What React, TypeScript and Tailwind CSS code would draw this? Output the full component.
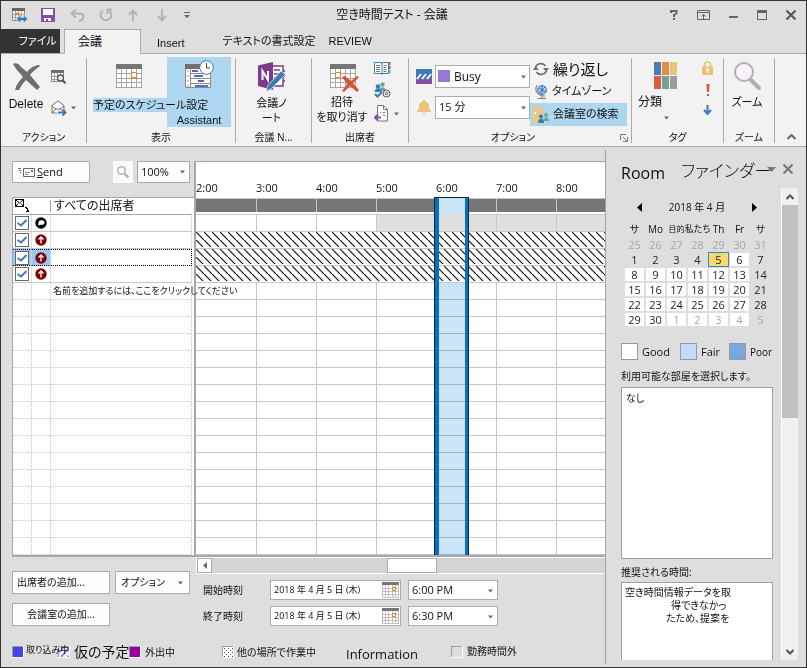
import { ReactNode } from "react";
import clsx from "clsx";

const HOURS = ["2:00", "3:00", "4:00", "5:00", "6:00", "7:00", "8:00"];
const ATTENDEES = ["organizer", "required", "required", "required"];
const EMPTY_ROWS = Array.from({ length: 15 }, (_, i) => i);

const WEEKDAYS = ["サ", "Mo", "目的", "私たち", "Th", "Fr", "サ"];
const WEEKS = [
  [25, 26, 27, 28, 29, 30, 31],
  [1, 2, 3, 4, 5, 6, 7],
  [8, 9, 10, 11, 12, 13, 14],
  [15, 16, 17, 18, 19, 20, 21],
  [22, 23, 24, 25, 26, 27, 28],
  [29, 30, 1, 2, 3, 4, 5],
];

function Caret({ className }: { className?: string }) {
  return (
    <svg className={className} width="7" height="4" viewBox="0 0 7 4" fill="#666">
      <path d="M0 0h7L3.5 4z" />
    </svg>
  );
}

type CalendarGridProps = { width: number; height: number; markX?: number };

function CalendarGrid({ width, height, markX = 15 }: CalendarGridProps) {
  return (
    <svg width={width} height={height} viewBox="0 0 26 24" shapeRendering="crispEdges">
      <path fill="#fff" d="M0 0h26v24H0z" />
      <path fill="none" stroke="#a5a5a5" d="M.5 5v18.500h25V5M5.500 5v18M10.500 5v18M15.500 5v18M20.500 5v18M0 9.500h26M0 14.500h26M0 18.500h26" />
      <path fill="#767676" d="M0 0h26v5H0z" />
      <rect x={markX + 0.5} y="8.500" width="5" height="5" fill="#fff" stroke="#e8822f" strokeWidth="1.500" />
    </svg>
  );
}

/* ---------- title bar ---------- */

function TitleBar() {
  return (
    <header className="flex h-7 items-center justify-between pr-[10px] pl-[11px]">
      <div className="flex items-center">
        <button aria-label="Meeting" className="w-[29px]">
          <svg width="16" height="15" viewBox="0 0 16 15">
            <path fill="#fff" stroke="#8a8a8a" d="M.5 1.500h12v11H.5z" />
            <path fill="#666" d="M0 0h13v3H0z" />
            <path stroke="#aaa" d="M3.500 3v9M6.500 3v9M9.500 3v9M1 6.500h12M1 9.500h12" />
            <path fill="none" stroke="#e8822f" strokeWidth="1.500" d="M3.500 9V5.500H7V8" />
            <path fill="#3d7ab8" stroke="#dedede" strokeWidth=".6" d="M4.500 11l4-4v2.500h3V7l4.300 4-4.300 4v-2.500h-3V15z" />
          </svg>
        </button>
        <button aria-label="Save" className="w-[29px]">
          <svg width="14" height="14" viewBox="0 0 14 14" shapeRendering="crispEdges">
            <path fill="#8650a8" d="M0 0h14v14H0z" />
            <path fill="#fff" d="M2 1h10v6H2zM3 10h7v3H3z" />
            <path fill="#8650a8" d="M5 11h2v2H5z" />
          </svg>
        </button>
        <button aria-label="Undo" className="w-[29px]">
          <svg width="15" height="13" viewBox="0 0 15 13" fill="none" stroke="#b3b3b3" strokeWidth="2">
            <path d="M6 .5L1.500 4.500 6 8.500M2 4.500h7c6 0 6 6 0 7.500" />
          </svg>
        </button>
        <button aria-label="Redo" className="w-[29px]">
          <svg width="14" height="14" viewBox="0 0 14 14" fill="none" stroke="#b3b3b3" strokeWidth="2">
            <path d="M4 2.500A5.300 5.300 0 1 0 10.500 3M8.500 6V1.500H13" />
          </svg>
        </button>
        <button aria-label="Previous" className="w-[29px]">
          <svg width="10" height="13" viewBox="0 0 10 13" fill="none" stroke="#b3b3b3" strokeWidth="2">
            <path d="M5 12V1.500M1 6l4-4.500L9 6" />
          </svg>
        </button>
        <button aria-label="Next" className="w-[27px]">
          <svg width="10" height="13" viewBox="0 0 10 13" fill="none" stroke="#b3b3b3" strokeWidth="2">
            <path d="M5 0v10.500M1 7l4 4.500L9 7" />
          </svg>
        </button>
        <button aria-label="Customize toolbar">
          <svg width="6" height="6" viewBox="0 0 6 6" fill="#666">
            <path d="M0 0h6v1H0zM0 3h6L3 6z" />
          </svg>
        </button>
      </div>
      <h1 className="mr-[76px] text-[12px] leading-4">空き時間テスト - 会議</h1>
      <div className="flex items-center gap-[15px]">
        <button aria-label="Help">
          <svg width="8" height="10" viewBox="0 0 8 10" fill="none" stroke="#666" strokeWidth="2">
            <path d="M1 3V1h5.500v2.500L4 5v2M4 8v2" />
          </svg>
        </button>
        <button aria-label="Ribbon display options" className="ml-1">
          <svg width="13" height="10" viewBox="0 0 13 10" fill="none" stroke="#666">
            <path d="M.5.5h12v9H.5zM1 2.500h11M6.500 9V4.500M4.500 6.500l2-2 2 2" />
          </svg>
        </button>
        <button aria-label="Minimize" className="ml-1">
          <svg width="9" height="10" viewBox="0 0 9 10">
            <path fill="#666" d="M0 6h9v2H0z" />
          </svg>
        </button>
        <button aria-label="Maximize" className="ml-1">
          <svg width="10" height="10" viewBox="0 0 10 10" shapeRendering="crispEdges">
            <path fill="none" stroke="#666" d="M.5.5h9v9h-9z" />
            <path fill="#666" d="M0 0h10v3H0z" />
          </svg>
        </button>
        <button aria-label="Close" className="ml-1">
          <svg width="10" height="10" viewBox="0 0 10 10" stroke="#555" strokeWidth="2">
            <path d="M.5.5l9 9M9.500.5l-9 9" />
          </svg>
        </button>
      </div>
    </header>
  );
}

function RibbonTabs() {
  return (
    <nav className="flex h-6 text-[12px] leading-6">
      <button className="w-[59px] bg-[#333] pl-[14px] text-[11px] text-white">ファイル</button>
      <button className="relative z-10 -mb-px ml-1 w-[77px] border border-b-0 border-[#ababab] bg-[#f2f2f2] pl-[13px] text-left">
        会議
      </button>
      <button className="ml-4 pt-[2px] [font-family:'Liberation_Sans',sans-serif] text-[11px]">Insert</button>
      <button className="ml-[38px] text-[11px]">テキストの書式設定</button>
      <button className="ml-[13px] [font-family:'Liberation_Sans',sans-serif] text-[11px]">REVIEW</button>
    </nav>
  );
}

/* ---------- ribbon ---------- */

type GroupProps = { title: ReactNode; className: string; children: ReactNode };

function Group({ title, className, children }: GroupProps) {
  return (
    <section className={clsx("flex shrink-0 flex-col border-r border-[#ababab]", className)}>
      <div className="flex h-[70px]">{children}</div>
      <h2 className="flex h-[15px] items-end justify-center text-[10px] leading-[11px] whitespace-nowrap">
        {title}
      </h2>
    </section>
  );
}

function Ribbon() {
  return (
    <div className="flex h-[94px] border-t border-b border-[#ababab] bg-[#f2f2f2] pt-1 pb-[3px]">
      <Group title="アクション" className="w-[86px]">
        <button className="flex w-[50px] flex-col items-center pt-[5px]">
          <svg width="29" height="27" viewBox="0 0 29 27" fill="#6e6e6e">
            <path d="M1 1c3-2 6 0 8 3l6 5c4-5 9-7 12-7l1 1c-4 3-8 6-10 9l10 12-3 3-11-10c-4 4-6 8-7 10H3c1-5 4-9 8-13C7 9 3 5 1 1z" />
          </svg>
          <span className="mt-1 text-[12px] leading-5 [font-family:'Liberation_Sans',sans-serif]">Delete</span>
        </button>
        <div className="flex flex-col items-start gap-4 pt-3">
          <button aria-label="Copy to my calendar">
            <svg width="15" height="14" viewBox="0 0 15 14">
              <path fill="#fff" stroke="#888" d="M.5.5h12v11H.5z" />
              <path fill="#6e6e6e" d="M0 0h13v3H0z" />
              <path stroke="#999" d="M3.500 3v9M6.500 3v9M9.500 3v9M1 6.500h12M1 9.500h12" />
              <circle cx="9.500" cy="8" r="3" fill="#f2f2f2" stroke="#555" strokeWidth="1.300" />
              <path stroke="#555" strokeWidth="2" d="M12 10.500l2.500 3" />
            </svg>
          </button>
          <button aria-label="Forward" className="flex items-center gap-1">
            <svg width="16" height="16" viewBox="0 0 16 16" fill="none" stroke="#6e6e6e">
              <path fill="#fff" d="M1 5.500L7 1l6 4.500V13H1z" />
              <path d="M1 6l4 3h4l4-3M1 13l4-4M13 13L9 9" />
              <path stroke="#f2f2f2" strokeWidth="4" d="M6 12.500h9" />
              <path stroke="#3d7ab8" strokeWidth="2" d="M7 12.500h7M11.500 9.500l3 3-3 3" />
            </svg>
            <Caret className="w-[5px]" />
          </button>
        </div>
      </Group>

      <Group title="表示" className="w-[149px]">
        <button className="relative z-10 flex w-[80px] flex-col pt-[6px] pl-[6px]">
          <span className="ml-[23px]">
            <CalendarGrid width={26} height={24} />
          </span>
          <span className="mt-[10px] w-max bg-[#afd6f1] text-[11px] leading-[14px] whitespace-nowrap">
            予定のスケジュール設定
          </span>
        </button>
        <button className="-mt-px flex h-[70px] w-[64px] flex-col items-center bg-[#afd6f1] pt-[3px]">
          <svg width="29" height="29" viewBox="0 0 29 29">
            <path fill="#fff" stroke="#8a8a8a" d="M.5 4.500h25v23H.5z" />
            <path fill="#6e6e6e" d="M0 4h18v5H0z" />
            <path stroke="#8a8a8a" d="M5.500 9v18M5 13.500h20M5 18.500h20M5 23.500h20" />
            <path stroke="#999" strokeDasharray="2 3" d="M3 10v17" />
            <path stroke="#8650a8" strokeWidth="2" d="M7 11h6M13 21h6" />
            <path stroke="#3d7ab8" strokeWidth="2" d="M9 16h9M10 26h13" />
            <circle cx="21.500" cy="7.500" r="6.800" fill="#fff" stroke="#3d7ab8" />
            <path fill="none" stroke="#444" d="M21.500 3v5H25" />
          </svg>
          <span className="mt-auto text-[11px] leading-[14px] [font-family:'Liberation_Sans',sans-serif]">Assistant</span>
        </button>
      </Group>

      <Group title="会議 N..." className="w-[76px]">
        <button className="flex w-full flex-col items-center pt-1 pr-1 text-[11px] leading-[15px]">
          <svg width="29" height="30" viewBox="0 0 29 30">
            <path fill="#fff" stroke="#7d3b8c" strokeWidth="1.500" d="M14 4h12v20H14z" />
            <path stroke="#7d3b8c" strokeWidth="1.500" d="M17 8h6M17 12h6M17 16h5M26 9h2M26 14h2M26 19h2" />
            <path fill="#7d3b8c" d="M1 3.500L16 0v28L1 24z" />
            <path fill="none" stroke="#fff" strokeWidth="2" d="M5.500 18V9l5.500 9V9" />
            <path fill="#3d7ab8" stroke="#f2f2f2" strokeWidth=".7" d="M24 9l4.500 3.500L14 27l-5 2.500L10.500 24z" />
          </svg>
          <span className="mt-[3px]">会議ノ<br />ート</span>
        </button>
      </Group>

      <Group title="出席者" className="w-[97px]">
        <button className="flex w-[60px] flex-col items-center pt-[6px] text-[11px] leading-[15px] whitespace-nowrap">
          <span className="ml-1 grid">
            <span className="col-start-1 row-start-1">
              <CalendarGrid width={26} height={24} markX={5} />
            </span>
            <svg className="col-start-1 row-start-1 mt-3 ml-3" width="17" height="16" viewBox="0 0 17 16" fill="#d45535">
              <path d="M0 1l3-1 6 5 6-5 2 1-6 6 6 7-2 2-7-6-6 6-2-1 5-7z" />
            </svg>
          </span>
          <span className="mt-[2px]">招待<br />を取り消す</span>
        </button>
        <div className="flex flex-col items-start gap-[7px] pt-[3px] pl-[2px]">
          <button aria-label="Address book">
            <svg width="17" height="14" viewBox="0 0 17 14" fill="none" stroke="#6e6e6e">
              <path fill="#fff" stroke="#3d7ab8" d="M.5 1.500h7l.5 1 .5-1h6v11h-6l-.5 1-.5-1h-7zM8 2v11" />
              <path stroke="#777" d="M2 4.500h4M2 6.500h4M2 8.500h4M2 10.500h4M9.500 4.500h3M9.500 6.500h3M9.500 8.500h3M9.500 10.500h3" />
              <path stroke="#d45535" strokeWidth="2" d="M15.500 1v3" />
              <path stroke="#3d7ab8" strokeWidth="2" d="M15.500 5v3" />
              <path stroke="#6fa795" strokeWidth="2" d="M15.500 9v3" />
            </svg>
          </button>
          <button aria-label="Check names">
            <svg width="17" height="16" viewBox="0 0 17 16">
              <circle cx="8.500" cy="2.500" r="2.300" fill="#6fa795" />
              <path fill="#6fa795" d="M5 9c0-5 7-5 7 0z" />
              <circle cx="4" cy="4.500" r="2.300" fill="#3d7ab8" />
              <path fill="#3d7ab8" d="M.5 10c0-5 7-5 7 0z" />
              <path fill="none" stroke="#3d7ab8" strokeWidth="2" d="M1 12l2.500 2.500L8 10" />
              <circle cx="12.500" cy="11.500" r="3.500" fill="#eee" stroke="#555" />
              <circle cx="12.500" cy="11.500" r="1.200" fill="none" stroke="#555" />
            </svg>
          </button>
          <button aria-label="Response options" className="flex items-center gap-[5px]">
            <svg width="15" height="17" viewBox="0 0 15 17">
              <path fill="#fff" stroke="#777" d="M3.500.5h6l4 4v11.500h-10z" />
              <path fill="none" stroke="#777" d="M9.500.5v4h4M6 7.500h1M9 7.500h2M9 10.500h2" />
              <path fill="none" stroke="#f2f2f2" strokeWidth="4" d="M0 12.500h6" />
              <path fill="none" stroke="#8650a8" strokeWidth="2" d="M1 12.500h6M4 9.500l-3 3 3 3" />
            </svg>
            <Caret className="w-[5px]" />
          </button>
        </div>
      </Group>

      <Group
        className="w-[223px]"
        title={
          <span className="flex w-full items-center">
            <span className="ml-[66px] flex-1 pl-4 text-left">オプション</span>
            <button aria-label="Options dialog" className="mr-[3px]">
              <svg width="8" height="8" viewBox="0 0 8 8" fill="none" stroke="#777">
                <path d="M.5 6V.5H6M3 3l4 4M7.500 3v4.500H3" />
              </svg>
            </button>
          </span>
        }
      >
        <div className="flex w-[121px] flex-col gap-2 pt-[7px] pl-[7px]">
          <label className="flex items-center gap-[3px]">
            <svg aria-label="Show as" width="16" height="15" viewBox="0 0 16 15">
              <path fill="#3d7ab8" d="M0 0h16v10H0z" />
              <path fill="#8650a8" d="M0 10h16v5H0z" />
              <path stroke="#fff" strokeWidth="2" d="M1 10l4-5M6 10l4-5M11 10l4-5" />
            </svg>
            <span className="relative flex flex-1">
              <select className="h-[23px] w-full appearance-none border border-[#ababab] bg-white pl-[18px] text-[12px]">
                <option>Busy</option>
              </select>
              <span className="absolute top-[5px] left-[3px] size-3 bg-[#967bd3]" />
              <Caret className="pointer-events-none absolute top-[10px] right-1 w-[5px]" />
            </span>
          </label>
          <label className="flex items-center gap-[3px]">
            <svg aria-label="Reminder" width="16" height="15" viewBox="0 0 16 15" fill="#e9c27c">
              <path d="M7 0h2v1c3 1 4 3 4 6 0 2 1 3 2 4v1H1v-1c1-1 2-2 2-4 0-3 1-5 4-6zM6 13h4l-2 2z" />
            </svg>
            <span className="relative flex flex-1">
              <select className="h-[23px] w-full appearance-none border border-[#ababab] bg-white pl-[3px] text-[11px]">
                <option>15 分</option>
              </select>
              <Caret className="pointer-events-none absolute top-[10px] right-1 w-[5px]" />
            </span>
          </label>
        </div>
        <div className="flex flex-1 flex-col">
          <button className="flex h-[22px] items-center gap-1 pl-[3px] text-[15px] leading-5">
            <svg width="16" height="14" viewBox="0 0 16 14" fill="none" stroke="#6e6e6e" strokeWidth="1.700">
              <path d="M2.500 7C2.500 1 10 0 12.500 4M13.500 7c0 6-7.500 7-10 3" />
              <path fill="#6e6e6e" stroke="none" d="M0 8h6L2.500 4.500zM10 6h6l-3 3.500z" />
            </svg>
            繰り返し
          </button>
          <button className="flex h-[23px] items-center gap-1 pl-[5px] text-[11px]">
            <svg width="13" height="15" viewBox="0 0 13 15" fill="none">
              <circle cx="7" cy="6" r="4.500" fill="#a8cce8" stroke="#3d7ab8" />
              <path stroke="#3d7ab8" d="M3 4l8 4M4 9l6-6M7 1.500v9" />
              <path stroke="#777" d="M2 1c-3 6 0 11 8 11M7 12v2M3 14.500h8" />
            </svg>
            タイムゾーン
          </button>
          <button className="flex h-[23px] w-[97px] items-center gap-1 bg-[#afd6f1] pl-[3px] text-[11px] whitespace-nowrap">
            <svg width="16" height="16" viewBox="0 0 16 16">
              <path fill="#f0c879" d="M0 0h10v16H0z" />
              <circle cx="2" cy="6" r="1" fill="#fff" />
              <circle cx="13" cy="8" r="2" fill="#6fa795" />
              <path fill="#6fa795" d="M10 14c0-5 6-5 6 0z" />
              <circle cx="8" cy="9.500" r="2" fill="#3d7ab8" />
              <path fill="#3d7ab8" d="M5 16c0-6 6-6 6 0z" />
            </svg>
            会議室の検索
          </button>
        </div>
      </Group>

      <Group title="タグ" className="w-[92px]">
        <button className="flex w-[62px] flex-col pt-1 pl-[6px] text-left text-[12px] leading-[18px]">
          <svg className="ml-4" width="23" height="27" viewBox="0 0 23 27" shapeRendering="crispEdges">
            <path fill="#4a7eb5" d="M0 0h7v13H0z" />
            <path fill="#e48d46" d="M8 0h7v13H8z" />
            <path fill="#e9c27c" d="M16 0h7v13h-7z" />
            <path fill="#d95c43" d="M0 14h7v13H0z" />
            <path fill="#72a38f" d="M8 14h7v13H8z" />
            <path fill="#9b9b9b" d="M16 14h7v13h-7z" />
          </svg>
          <span className="mt-[4px]">分類</span>
          <Caret className="mt-[5px] ml-[26px] w-[5px]" />
        </button>
        <div className="flex flex-col items-center gap-[9px] pt-[3px] pl-2">
          <button aria-label="Private">
            <svg width="11" height="14" viewBox="0 0 11 14">
              <path fill="none" stroke="#e9c27c" strokeWidth="1.500" d="M2.500 6V4c0-4 6-4 6 0v2" />
              <path fill="#e9c27c" d="M0 5.500h11V14H0z" />
              <path fill="#fff" d="M4 7.500h3v2l-1 .5v2H5v-2l-1-.5z" />
            </svg>
          </button>
          <button aria-label="High importance">
            <svg width="4" height="12" viewBox="0 0 4 12" fill="#d45535">
              <path d="M.5 0h3L3 8H1zM1 10h2v2H1z" />
            </svg>
          </button>
          <button aria-label="Low importance">
            <svg width="9" height="11" viewBox="0 0 9 11" fill="none" stroke="#3d7ab8" strokeWidth="2">
              <path d="M4.500 0v9M1 5l3.500 4L8 5" />
            </svg>
          </button>
        </div>
      </Group>

      <Group title="ズーム" className="w-[51px]">
        <button className="flex w-full flex-col items-center pt-1 pr-1 text-[11px] leading-4">
          <svg width="27" height="28" viewBox="0 0 27 28" stroke="#b0b0b0">
            <circle cx="10" cy="10" r="9" fill="#f7f3f8" strokeWidth="2" />
            <path strokeWidth="4" strokeLinecap="round" d="M17 18l8 8" />
          </svg>
          <span className="mt-1">ズーム</span>
        </button>
      </Group>

      <button aria-label="Collapse ribbon" className="mr-[10px] ml-auto self-end pb-[3px]">
        <svg width="9" height="6" viewBox="0 0 9 6" fill="none" stroke="#666" strokeWidth="2">
          <path d="M.5 5l4-4 4 4" />
        </svg>
      </button>
    </div>
  );
}

/* ---------- attendee list ---------- */

function Toolbar() {
  return (
    <div className="flex h-9 items-start">
      <button className="flex h-[22px] w-[78px] items-center gap-[2px] border border-[#ababab] bg-[#fdfdfd] pl-[5px] text-[11px] leading-4">
        <svg width="17" height="9" viewBox="0 0 17 9" fill="none" stroke="#666">
          <path d="M0 .5h3M1 2.500h2M2 4.500h1M5.500.5h11v8h-11z" />
          <path stroke="#999" d="M7 4.500h5M7 6.500h3" />
          <path stroke="#3d7ab8" strokeWidth="2" d="M13 3h2" />
        </svg>
        <span>
          <u>S</u>end
        </span>
      </button>
      <button aria-label="Zoom" className="ml-[23px] flex h-[22px] w-5 items-center justify-center bg-[#fafafa]">
        <svg width="12" height="12" viewBox="0 0 12 12" fill="none" stroke="#b8b3b8">
          <circle cx="4.500" cy="4.500" r="3.800" strokeWidth="1.500" />
          <path strokeWidth="2.500" d="M7.500 7.500l4 4" />
        </svg>
      </button>
      <span className="relative ml-1">
        <select aria-label="Zoom level" className="block h-[22px] w-[53px] appearance-none border border-[#ababab] bg-[#fdfdfd] pl-[3px] text-[11px]">
          <option>100%</option>
        </select>
        <Caret className="pointer-events-none absolute top-[9px] right-[5px] w-[5px]" />
      </span>
    </div>
  );
}

function AttendeeTable() {
  return (
    <table className="h-[360px] w-full table-fixed border-separate border-spacing-0 border border-b-2 border-r-0 border-[#a0a8b4] bg-white">
      <colgroup>
        <col className="w-[19px]" />
        <col className="w-[19px]" />
        <col />
        <col className="w-[2px]" />
      </colgroup>
      <thead>
        <tr className="h-[17px] leading-4">
          <th className="border-b border-[#a0a8b4] p-0 pl-[2px]">
            <svg width="15" height="14" viewBox="0 0 15 14" fill="none" stroke="#000" shapeRendering="crispEdges">
              <path d="M.5.5h8v7h-8z" />
              <path shapeRendering="auto" d="M1 1l3.500 3L8 1M1 7l2-2.500M8 7L6 4.500" />
              <path fill="#000" stroke="none" d="M10 8h2v1h1v2h1v2h-3v-1h1v-2h-1V9h-1z" />
            </svg>
          </th>
          <th className="border-b border-[#a0a8b4] p-0">
            <div className="h-3 border-r border-[#a0a8b4]" />
          </th>
          <th className="border-b border-[#a0a8b4] p-0 pl-[3px] text-left text-[12px] leading-4 font-normal">すべての出席者</th>
          <th className="p-0" />
        </tr>
      </thead>
      <tbody>
        {ATTENDEES.map((role, i) => {
          const selected = i === 2;
          const line = selected ? "border-y border-dotted border-y-black" : "border-b border-[#c6c6c6]";
          return (
            <tr key={i} className="h-[17px] leading-none">
              <td className={clsx("border-r border-r-[#dcdcdc] p-0", line, selected && "bg-[#9ccaf0]")}>
                <label className="grid w-[17px] place-items-center">
                  <input
                    type="checkbox"
                    defaultChecked
                    aria-label={`Attendee ${i + 1}`}
                    className="col-start-1 row-start-1 ml-px size-[14px] appearance-none border border-[#666] bg-white"
                  />
                  <svg className="pointer-events-none col-start-1 row-start-1 ml-px" width="10" height="8" viewBox="0 0 10 8" fill="none" stroke="#3d7ab8" strokeWidth="2">
                    <path d="M.5 4L4 6.500 9.500 1" />
                  </svg>
                </label>
              </td>
              <td className={clsx("border-r border-r-[#dcdcdc] p-0", line, selected && "bg-[#9ccaf0]")}>
                <svg className="ml-[3px]" width="12" height="12" viewBox="0 0 12 12">
                  {role === "organizer" ? (
                    <>
                      <circle cx="6" cy="6" r="5.700" />
                      <ellipse cx="6.500" cy="5.500" rx="3" ry="2.300" fill="#fff" />
                      <path fill="#fff" d="M3.500 6l-.5 2.500L6 7.500z" />
                    </>
                  ) : (
                    <>
                      <circle cx="6" cy="6" r="5.700" fill="#800000" />
                      <path fill="none" stroke="#fff" strokeWidth="1.300" d="M6 9.500V3M3.500 5.500L6 3l2.500 2.500" />
                    </>
                  )}
                </svg>
              </td>
              <td className={clsx("border-r p-0", selected ? "border-r-black" : "border-r-[#dcdcdc]", line)} />
              <td className="p-0" />
            </tr>
          );
        })}
        <tr className="h-[17px] leading-none">
          <td className="border-r border-b border-dotted border-[#c6c6c6] p-0" />
          <td className="border-r border-b border-dotted border-[#c6c6c6] p-0" />
          <td className="border-r border-b border-dotted border-[#c6c6c6] p-0 pl-[2px] text-[9px] leading-3 whitespace-nowrap">
            <span className="relative z-20">名前を追加するには、ここをクリックしてください</span>
          </td>
          <td className="p-0" />
        </tr>
        {EMPTY_ROWS.map((row) => (
          <tr key={row} className="h-[17px]">
            <td className="border-r border-b border-dotted border-[#c6c6c6] p-0" />
            <td className="border-r border-b border-dotted border-[#c6c6c6] p-0" />
            <td className="border-r border-b border-dotted border-[#c6c6c6] p-0" />
            <td className="p-0" />
          </tr>
        ))}
      </tbody>
    </table>
  );
}

/* ---------- timeline ---------- */

function HourCells({ busyFrom }: { busyFrom?: number }) {
  return (
    <>
      {HOURS.map((hour, i) => (
        <div
          key={hour}
          className={clsx(
            "w-[60px] shrink-0 border-[#c6c6c6] last:flex-1",
            i > 0 && "border-l",
            busyFrom !== undefined && i >= busyFrom && "bg-[#dfdfdf]",
          )}
        />
      ))}
    </>
  );
}

function Timeline() {
  return (
    <div className="relative h-[396px] overflow-hidden border-t border-b-2 border-l-2 border-[#a0a8b4] bg-white">
      <div className="flex h-9 items-end pb-[2px] text-[11px] leading-4">
        {HOURS.map((hour) => (
          <span key={hour} className="w-[60px] shrink-0">{hour}</span>
        ))}
      </div>
      <div className="h-[17px] border-t border-b border-[#c6c6c6] pb-[2px]">
        <div className="flex h-[13px] bg-[#767676]">
          <HourCells />
        </div>
      </div>
      <div className="flex h-[17px] border-b border-[#c6c6c6]">
        <HourCells busyFrom={3} />
      </div>
      {[0, 1, 2].map((row) => (
        <div key={row} className="h-[17px] border-b border-[#c6c6c6]">
          <svg className="block h-4 w-full">
            <defs>
              <pattern id={`hatch-${row}`} width="8" height="8" patternUnits="userSpaceOnUse">
                <path d="M-1-1l10 10" stroke="#111" strokeWidth="1.200" />
              </pattern>
            </defs>
            <rect width="100%" height="15" fill={`url(#hatch-${row})`} />
          </svg>
        </div>
      ))}
      {[...EMPTY_ROWS, 15].map((row) => (
        <div key={row} className="flex h-[17px] border-b border-[#c6c6c6]">
          <HourCells />
        </div>
      ))}
      {/* selected meeting slot, laid over the grid */}
      <div className="absolute top-[35px] bottom-0 left-[238px] w-[35px] border border-b-0 border-[#222]">
        <div className="h-full border-r-[3px] border-l-4 border-[#0072c6]">
          <div className="h-[16px] bg-[#cce4f7]" />
          <div className="h-[17px] bg-[#dfdfdf]" />
        </div>
      </div>
      <div className="absolute top-[121px] bottom-0 left-[243px] w-[26px] bg-[#cce4f7] mix-blend-multiply" />
    </div>
  );
}

function MeetingTimes() {
  const rows = [
    { id: "start", label: "開始時刻", time: "6:00 PM" },
    { id: "end", label: "終了時刻", time: "6:30 PM" },
  ];
  return (
    <div className="mt-[6px] flex flex-col gap-[6px] pl-[9px]">
      {rows.map((row) => (
        <div key={row.id} className="flex h-5 items-center">
          <label htmlFor={row.id} className="w-[67px] text-[10px]">{row.label}</label>
          <div className="flex h-5 w-[131px] items-center border border-[#ababab] bg-white pr-px">
            <input
              id={row.id}
              defaultValue="2018 年 4 月 5 日 (木)"
              className="min-w-0 flex-1 bg-transparent pl-[3px] text-[9px] outline-none"
            />
            <button aria-label="Pick a date">
              <CalendarGrid width={17} height={16} />
            </button>
          </div>
          <span className="relative ml-[7px]">
            <select aria-label={`${row.label} (時間)`} className="block h-5 w-[90px] appearance-none border border-[#ababab] bg-white pl-[3px] text-[11px]">
              <option>{row.time}</option>
            </select>
            <Caret className="pointer-events-none absolute top-[9px] right-[5px] w-[5px]" />
          </span>
        </div>
      ))}
    </div>
  );
}

function Swatch({ children }: { children: ReactNode }) {
  return (
    <svg className="shrink-0" width="12" height="12" viewBox="0 0 12 12" shapeRendering="crispEdges">
      {children}
      <path fill="none" stroke="#9c9c9c" d="M0 .5h11M.5 0v11" />
      <path fill="none" stroke="#fff" d="M0 11.500h12M11.500 0v12" />
    </svg>
  );
}

function Legend() {
  return (
    <footer className="mt-auto mb-[3px] flex h-6 items-center pl-[11px] text-[10px] leading-4 whitespace-nowrap">
      <span className="relative z-10 flex w-[46px] shrink-0 items-center gap-[2px]">
        <Swatch><path fill="#4545e8" d="M0 0h12v12H0z" /></Swatch>
        <span className="pb-1 text-[9px]">取り込み中</span>
      </span>
      <span className="flex w-[71px] shrink-0 items-center gap-1">
        <Swatch>
          <path fill="#e8ecff" d="M0 0h12v12H0z" />
          <path stroke="#6f80d8" shapeRendering="auto" strokeWidth="1.500" d="M1 6l5-5M3 11l8-9M9 12l3-3" />
        </Swatch>
        <span className="text-[14px]">仮の予定</span>
      </span>
      <span className="flex w-[93px] shrink-0 items-center gap-1">
        <Swatch><path fill="#990099" d="M0 0h12v12H0z" /></Swatch>
        外出中
      </span>
      <span className="flex w-[124px] shrink-0 items-center gap-[3px]">
        <Swatch>
          <path fill="#fff" d="M0 0h12v12H0z" />
          <path stroke="#444" strokeDasharray="1 3" d="M2 2.500h10M4 4.500h8M2 6.500h10M4 8.500h8M2 10.500h10" />
        </Swatch>
        他の場所で作業中
      </span>
      <span className="w-[105px] shrink-0 pt-1 text-[13px]">Information</span>
      <span className="flex items-center gap-1">
        <Swatch><path fill="#dedede" d="M0 0h12v12H0z" /></Swatch>
        <span className="pb-[2px]">勤務時間外</span>
      </span>
    </footer>
  );
}

function Scheduler() {
  return (
    <main className="flex min-w-0 flex-1 flex-col pt-[14px]">
      <div className="flex pl-[11px]">
        <div className="w-[182px] shrink-0">
          <Toolbar />
          <AttendeeTable />
          <div className="mt-[14px] flex flex-wrap gap-x-[5px] gap-y-[9px] text-[10px]">
            <button className="h-[23px] w-[98px] border border-[#ababab] bg-[#fdfdfd] pl-1 text-left">出席者の追加...</button>
            <button className="flex h-[23px] w-[75px] items-center justify-between border border-[#ababab] bg-[#fdfdfd] pr-[6px] pl-[5px]">
              オプション
              <Caret className="w-[5px]" />
            </button>
            <button className="h-[23px] w-[98px] border border-[#ababab] bg-[#fdfdfd]">会議室の追加...</button>
          </div>
        </div>
        <div className="min-w-0 flex-1">
          <Timeline />
          {/* horizontal scroll bar */}
          <div className="ml-[2px] flex h-[17px] border border-r-0 border-white bg-[#d4d4d4]">
            <button aria-label="Scroll left" className="flex w-[15px] items-center justify-center border border-[#ababab] bg-white">
              <svg width="4" height="7" viewBox="0 0 4 7" fill="#666">
                <path d="M4 0v7L0 3.500z" />
              </svg>
            </button>
            <div className="flex flex-1 pl-[43%]">
              <div className="w-[50px] border border-[#ababab] bg-white" />
            </div>
          </div>
          <MeetingTimes />
        </div>
      </div>
      <Legend />
    </main>
  );
}

/* ---------- room finder ---------- */

function MonthCalendar() {
  return (
    <div className="mt-[11px] w-[152px]">
      <div className="flex h-4 items-center justify-between px-4 text-[10px] leading-4">
        <button aria-label="Previous month">
          <svg width="5" height="9" viewBox="0 0 5 9"><path d="M5 0v9L0 4.500z" /></svg>
        </button>
        <span>2018 年 4 月</span>
        <button aria-label="Next month">
          <svg width="5" height="9" viewBox="0 0 5 9"><path d="M0 0v9l5-4.500z" /></svg>
        </button>
      </div>
      <table className="mt-[5px] ml-[2px] w-[149px] table-fixed border-separate border-spacing-x-[2px] border-spacing-y-[2px] text-center text-[11px]">
        <thead>
          <tr className="text-[10px] leading-[14px] whitespace-nowrap">
            {WEEKDAYS.map((day, i) => (
              <th key={i} className={clsx("p-0 font-normal", day.length > 2 && "text-[9px]", day === "目的" && "text-[8px]")}>
                <span className="flex justify-center">{day}</span>
              </th>
            ))}
          </tr>
        </thead>
        <tbody>
          {WEEKS.map((week, w) => (
            <tr key={w} className="h-[13px] leading-[13px]">
              {week.map((day, d) => {
                const outside = w === 0 || (w === 5 && day < 10);
                const today = w === 1 && day === 5;
                const open = d < 6 && (w > 1 || (w === 1 && day === 6));
                return (
                  <td
                    key={d}
                    className={clsx(
                      "p-0",
                      outside ? "text-[#a3a8ae]" : "text-[#222]",
                      open && "bg-white",
                      today && "bg-[#ffd86b] outline outline-[#2b88d8]",
                    )}
                  >
                    {day}
                  </td>
                );
              })}
            </tr>
          ))}
        </tbody>
      </table>
    </div>
  );
}

function RoomFinder() {
  return (
    <aside className="mt-[3px] mb-[3px] flex w-[201px] shrink-0 flex-col border-l border-[#a0a0a0] pl-[15px]">
      <div className="flex h-[38px] items-center">
        <h2 className="flex items-center gap-4 leading-6 whitespace-nowrap">
          <span className="pt-2 text-[16px]">Room</span>
          <span className="pt-1 text-[17px] font-light">ファインダー</span>
        </h2>
        <button aria-label="Pane options" className="-ml-1 shrink-0">
          <svg width="9" height="5" viewBox="0 0 9 5" fill="#777"><path d="M0 0h9L4.500 5z" /></svg>
        </button>
        <button aria-label="Close pane" className="mr-[13px] ml-auto shrink-0">
          <svg width="10" height="10" viewBox="0 0 10 10" stroke="#777" strokeWidth="2"><path d="M.5.5l9 9M9.500.5l-9 9" /></svg>
        </button>
      </div>
      <div className="flex flex-1 pr-2 pb-[4px]">
        <div className="flex flex-1 flex-col">
          <MonthCalendar />
          <div className="mt-[15px] flex h-[17px] items-center text-[11px] leading-4">
            <span className="flex w-[59px] items-center gap-1">
              <span className="size-[17px] border border-[#999] bg-white" />
              Good
            </span>
            <span className="flex w-[49px] items-center gap-1">
              <span className="size-[17px] border border-[#999] bg-[#c2dcff]" />
              Fair
            </span>
            <span className="flex items-center gap-1">
              <span className="size-[17px] border border-[#999] bg-[#7aa7e3]" />
              <span className="text-[10px]">Poor</span>
            </span>
          </div>
          <h3 className="mt-2 text-[10px] leading-4">利用可能な部屋を選択します。</h3>
          <ul className="mt-[3px] h-[172px] w-[152px] border border-[#a0a0a0] bg-white p-1 text-[10px] leading-3">
            <li>なし</li>
          </ul>
          <h3 className="mt-[5px] text-[10px] leading-4">推奨される時間:</h3>
          <div className="mt-[2px] w-[152px] flex-1 border border-b-0 border-[#a0a0a0] bg-white px-[3px] pt-[3px] text-[10px] leading-[13px]">
            <p>空き時間情報データを取</p>
            <p className="pl-[46px]">得できなかっ</p>
            <p className="pl-[41px]">たため、提案を</p>
          </div>
        </div>
        {/* vertical scroll bar */}
        <div className="flex w-[17px] flex-col border-l border-white bg-[#f0f0f0]">
          <button aria-label="Scroll up" className="flex h-[17px] items-center justify-center">
            <svg width="8" height="6" viewBox="0 0 8 6" fill="none" stroke="#555" strokeWidth="2"><path d="M.5 5L4 1.500 7.500 5" /></svg>
          </button>
          <div className="h-[213px] bg-[#c0c0c0]" />
          <button aria-label="Scroll down" className="mt-auto flex h-[17px] items-center justify-center">
            <svg width="8" height="6" viewBox="0 0 8 6" fill="none" stroke="#555" strokeWidth="2"><path d="M.5 1L4 4.500 7.500 1" /></svg>
          </button>
        </div>
      </div>
    </aside>
  );
}

export default function App() {
  return (
    <div className="flex min-h-screen flex-col border border-[#333] bg-[#dedede] text-[#111] [font-family:'Open_Sans','Noto_Sans_CJK_JP',sans-serif] [font-feature-settings:'palt']">
      <TitleBar />
      <RibbonTabs />
      <Ribbon />
      <div className="flex flex-1">
        <Scheduler />
        <RoomFinder />
      </div>
    </div>
  );
}
